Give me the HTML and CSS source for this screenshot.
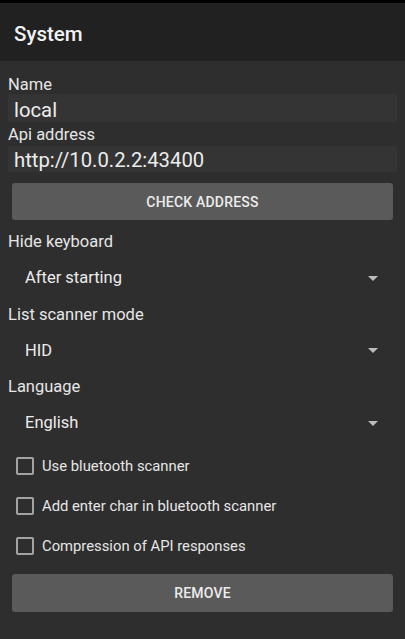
FILE: index.html
```html
<!DOCTYPE html>
<html lang="en">
<head>
<meta charset="utf-8">
<title>System</title>
<link rel="stylesheet" href="styles.css">
</head>
<body>
<div class="status"></div>
<header class="appbar"><h1 class="title">System</h1></header>
<main class="content">
  <div class="field-label">Name</div>
  <div class="input input-name">local</div>
  <div class="field-label label-api">Api address</div>
  <div class="input input-api">http://10.0.2.2:43400</div>
  <button class="btn btn-check">CHECK ADDRESS</button>

  <div class="field-label label-first">Hide keyboard</div>
  <div class="spinner"><span>After starting</span><span class="arrow"></span></div>
  <div class="field-label">List scanner mode</div>
  <div class="spinner"><span>HID</span><span class="arrow"></span></div>
  <div class="field-label">Language</div>
  <div class="spinner"><span>English</span><span class="arrow"></span></div>

  <ul class="checks">
    <li class="check"><span class="box"></span><span>Use bluetooth scanner</span></li>
    <li class="check"><span class="box"></span><span>Add enter char in bluetooth scanner</span></li>
    <li class="check"><span class="box"></span><span>Compression of API responses</span></li>
  </ul>

  <button class="btn btn-remove">REMOVE</button>
</main>
</body>
</html>
```

FILE: styles.css
```css
html, body {
  margin: 0;
  padding: 0;
}
body {
  background: #2e2e2e;
  color: #e6e6e6;
  font-family: Roboto, "Noto Sans", "Liberation Sans", sans-serif;
  width: 405px;
  height: 639px;
  overflow: hidden;
}
.status {
  height: 3px;
  background: #000;
}
.appbar {
  height: 58px;
  box-sizing: border-box;
  padding: 5px 14px 0;
  background: #212121;
}
.title {
  margin: 0;
  font-size: 20.5px;
  font-weight: 500;
  line-height: 53px;
  color: #f2f2f2;
}
.content {
  padding: 14px 8px 0;
  display: flex;
  flex-direction: column;
}
.field-label {
  font-size: 16.5px;
  line-height: 19px;
  height: 19px;
  color: #e6e6e6;
}
.label-api {
  margin-top: 3px;
}
.input {
  background: #343434;
  font-size: 20.3px;
  color: #ececec;
  padding-left: 6px;
  box-sizing: border-box;
}
.input-name {
  height: 28px;
  padding-top: 4px;
  line-height: 24px;
}
.input-api {
  margin-top: 2px;
  height: 26px;
  padding-top: 2px;
  line-height: 24px;
}
.btn {
  display: block;
  border: 0;
  margin: 0 4px;
  background: #5a5a5a;
  color: #ececec;
  border-radius: 3px;
  font-family: Roboto, "Noto Sans", "Liberation Sans", sans-serif;
  font-weight: 500;
  font-size: 14px;
  letter-spacing: 0.2px;
  padding: 0;
  text-align: center;
}
.btn-check {
  margin-top: 11px;
  height: 37px;
}
.label-first {
  margin-top: 12px;
}
.spinner {
  height: 53.5px;
  display: flex;
  align-items: center;
  justify-content: space-between;
  padding: 0 19px 0 17px;
  font-size: 16.5px;
  color: #ececec;
}
.arrow {
  width: 0;
  height: 0;
  border-left: 5.5px solid transparent;
  border-right: 5.5px solid transparent;
  border-top: 5.5px solid #bdbdbd;
  margin-top: 1px;
}
.checks {
  list-style: none;
  margin: 0;
  padding: 0;
  display: flex;
  flex-direction: column;
  gap: 8px;
}
.check {
  height: 32px;
  display: flex;
  align-items: center;
  gap: 8px;
  padding-left: 8px;
  font-size: 14.8px;
  color: #e6e6e6;
}
.box {
  width: 18px;
  height: 18px;
  box-sizing: border-box;
  border: 2px solid #a3a3a3;
  border-radius: 2px;
  flex: none;
}
.btn-remove {
  margin-top: 12.5px;
  height: 38px;
}
```
